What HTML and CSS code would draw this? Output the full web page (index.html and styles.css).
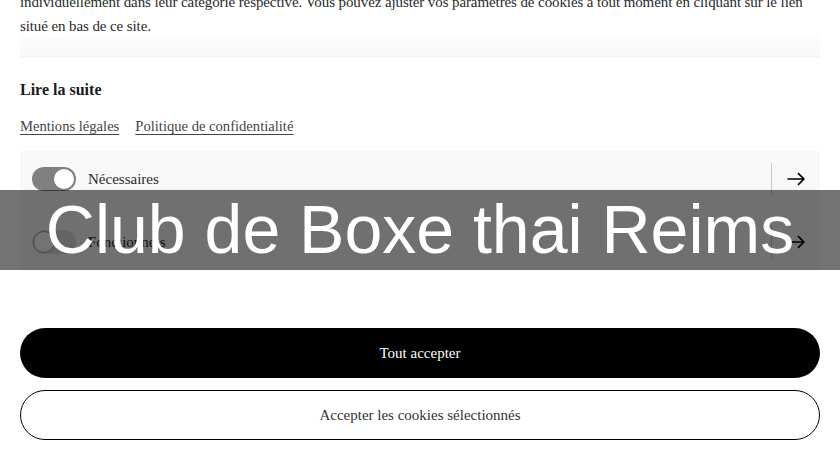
FILE: index.html
```html
<!DOCTYPE html>
<html lang="fr">
<head>
<meta charset="utf-8">
<title>Club de Boxe thai Reims</title>
<link rel="stylesheet" href="styles.css">
</head>
<body>
<div class="page">
  <div class="desc-box">
    <p class="desc">individuellement dans leur catégorie respective. Vous pouvez ajuster vos paramètres de cookies à tout moment en cliquant sur le lien situé en bas de ce site.</p>
  </div>
  <h3 class="more">Lire la suite</h3>
  <div class="links">
    <a href="#" class="link">Mentions légales</a>
    <a href="#" class="link">Politique de confidentialité</a>
  </div>
  <div class="cats">
    <div class="cat">
      <span class="toggle on"><span class="knob"></span></span>
      <span class="cat-label">Nécessaires</span>
      <span class="divider"></span>
      <svg class="arrow" width="18" height="14" viewBox="0 0 18 14"><path d="M0.5 7H17M11 1.2L16.9 7L11 12.8" fill="none" stroke="#000" stroke-width="1.7"/></svg>
    </div>
    <div class="cat">
      <span class="toggle off"><span class="knob"></span></span>
      <span class="cat-label">Fonctionnels</span>
      <span class="divider"></span>
      <svg class="arrow" width="18" height="14" viewBox="0 0 18 14"><path d="M0.5 7H17M11 1.2L16.9 7L11 12.8" fill="none" stroke="#000" stroke-width="1.7"/></svg>
    </div>
  </div>
  <div class="actions">
    <button class="btn btn-primary">Tout accepter</button>
    <button class="btn btn-outline">Accepter les cookies sélectionnés</button>
  </div>
</div>
<div class="banner">Club de Boxe thai Reims</div>
</body>
</html>
```
FILE: styles.css
```css
html, body {
  margin: 0;
  padding: 0;
  background: #fff;
}
body {
  font-family: "Liberation Serif", "DejaVu Serif", serif;
  color: #2a2a2a;
  font-size: 15px;
  overflow: hidden;
}
.page {
  padding: 0 20px;
}
.desc-box {
  position: relative;
  margin-top: -10px;
  padding-bottom: 20px;
}
.desc-box::after {
  content: "";
  position: absolute;
  left: 0;
  right: 0;
  bottom: 0;
  height: 24px;
  background: linear-gradient(to bottom, rgba(248,248,248,0.2), #f7f7f7);
}
.desc {
  margin: 0;
  line-height: 24px;
  letter-spacing: -0.1px;
}
.more {
  margin: 20px 0 0;
  font-size: 16px;
  line-height: 24px;
  font-weight: bold;
  color: #1a1a1a;
}
.links {
  margin-top: 12px;
  display: flex;
  gap: 16px;
  line-height: 24px;
  font-size: 14.6px;
}
.link {
  color: #444;
  text-decoration: underline;
  text-underline-offset: 3px;
  text-decoration-thickness: 1px;
}
.cats {
  margin-top: 13px;
  background: #f8f8f8;
  padding: 16px 15px 16px 12px;
  display: flex;
  flex-direction: column;
  gap: 39px;
}
.cat {
  display: flex;
  align-items: center;
  height: 24px;
}
.toggle {
  position: relative;
  width: 44px;
  height: 24px;
  border-radius: 12px;
  box-sizing: border-box;
  flex: none;
}
.toggle.on {
  background: #808080;
}
.toggle.off {
  background: #dedede;
}
.knob {
  position: absolute;
  top: 2px;
  width: 20px;
  height: 20px;
  border-radius: 50%;
  background: #fff;
  box-sizing: border-box;
}
.toggle.on .knob {
  right: 2px;
}
.toggle.off .knob {
  left: 1px;
  top: 1px;
  width: 22px;
  height: 22px;
  border: 1px solid #9a9a9a;
}
.cat-label {
  flex: 1;
  margin-left: 12px;
  font-size: 15px;
  color: #2a2a2a;
}
.divider {
  width: 1px;
  height: 32px;
  background: #c9c9d1;
  margin-right: 15px;
}
.arrow {
  display: block;
}
.actions {
  margin-top: 58px;
  display: flex;
  flex-direction: column;
  gap: 12px;
}
.btn {
  height: 50px;
  border-radius: 25px;
  font-family: inherit;
  font-size: 15px;
  width: 100%;
  cursor: pointer;
}
.btn-primary {
  background: #000;
  color: #fff;
  border: none;
}
.btn-outline {
  background: #fff;
  color: #333;
  border: 1px solid #000;
}
.banner {
  position: absolute;
  left: 0;
  right: 0;
  top: 190px;
  height: 80px;
  line-height: 78px;
  background: rgba(0,0,0,0.55);
  color: #fff;
  text-align: center;
  font-family: "Liberation Sans", Arial, sans-serif;
  font-size: 68px;
  white-space: nowrap;
}
```
